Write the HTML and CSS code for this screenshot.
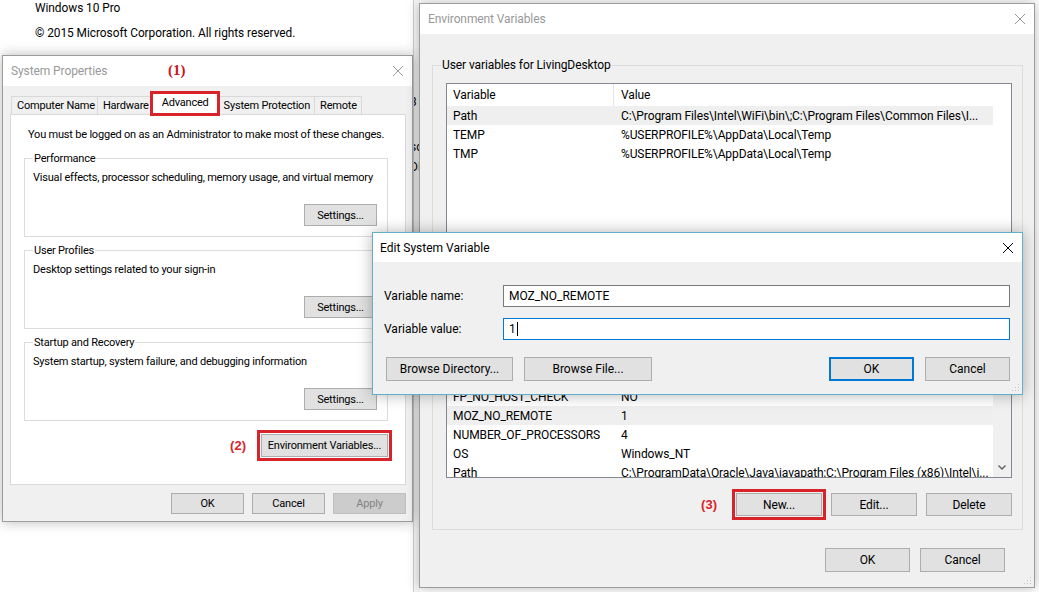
FILE: index.html
```html
<!DOCTYPE html>
<html>
<head>
  <title>Environment Variables</title>
  <link rel="stylesheet" href="styles.css">
</head>
<body>
  <!-- System window behind the dialogs -->
  <div class="about-text">
    <div class="os-name">Windows 10 Pro</div>
    <div class="copyright">© 2015 Microsoft Corporation. All rights reserved.</div>
  </div>
  <div class="behind-strip">
    <div class="frag frag-first">3</div>
    <div class="frag frag-second">sc</div>
    <div class="frag">Di</div>
  </div>

  <!-- System Properties -->
  <div class="window sysprops inactive">
    <div class="titlebar">
      <span class="title">System Properties</span>
      <svg class="close-icon" viewBox="0 0 10 10"><path d="M0 0L10 10M10 0L0 10"/></svg>
    </div>
    <div class="sysprops-body">
      <div class="tabs">
        <div class="tab">Computer Name</div>
        <div class="tab">Hardware</div>
        <div class="tab selected">Advanced</div>
        <div class="tab">System Protection</div>
        <div class="tab">Remote</div>
      </div>
      <div class="tab-panel">
        <p class="notice">You must be logged on as an Administrator to make most of these changes.</p>
        <fieldset class="group">
          <legend>Performance</legend>
          <p class="group-text">Visual effects, processor scheduling, memory usage, and virtual memory</p>
          <div class="group-actions"><button class="btn btn-settings">Settings...</button></div>
        </fieldset>
        <fieldset class="group">
          <legend>User Profiles</legend>
          <p class="group-text">Desktop settings related to your sign-in</p>
          <div class="group-actions"><button class="btn btn-settings">Settings...</button></div>
        </fieldset>
        <fieldset class="group">
          <legend>Startup and Recovery</legend>
          <p class="group-text">System startup, system failure, and debugging information</p>
          <div class="group-actions"><button class="btn btn-settings">Settings...</button></div>
        </fieldset>
        <div class="env-row">
          <span class="step">(2)</span>
          <button class="btn btn-env marked">Environment Variables...</button>
        </div>
      </div>
      <div class="dialog-buttons">
        <button class="btn btn-dialog">OK</button>
        <button class="btn btn-dialog">Cancel</button>
        <button class="btn btn-dialog" disabled>Apply</button>
      </div>
    </div>
  </div>
  <span class="step step-one">(1)</span>

  <!-- Environment Variables -->
  <div class="window envvars inactive">
    <div class="titlebar">
      <span class="title">Environment Variables</span>
      <svg class="close-icon" viewBox="0 0 10 10"><path d="M0 0L10 10M10 0L0 10"/></svg>
    </div>
    <div class="env-body">
      <fieldset class="env-group user-group">
        <legend>User variables for LivingDesktop</legend>
        <div class="list user-list">
          <div class="list-table">
            <div class="list-row list-head"><span class="col-var">Variable</span><span class="col-val">Value</span></div>
            <div class="list-row selected"><span class="col-var">Path</span><span class="col-val">C:\Program Files\Intel\WiFi\bin\;C:\Program Files\Common Files\I...</span></div>
            <div class="list-row"><span class="col-var">TEMP</span><span class="col-val">%USERPROFILE%\AppData\Local\Temp</span></div>
            <div class="list-row"><span class="col-var">TMP</span><span class="col-val">%USERPROFILE%\AppData\Local\Temp</span></div>
          </div>
        </div>
        <div class="list-buttons">
          <button class="btn btn-list">New...</button>
          <button class="btn btn-list">Edit...</button>
          <button class="btn btn-list">Delete</button>
        </div>
      </fieldset>
      <fieldset class="env-group system-group">
        <legend>System variables</legend>
        <div class="list system-list">
          <div class="list-table">
            <div class="list-row list-head"><span class="col-var">Variable</span><span class="col-val">Value</span></div>
            <div class="list-row"><span class="col-var">ComSpec</span><span class="col-val">C:\WINDOWS\system32\cmd.exe</span></div>
            <div class="list-row"><span class="col-var">DriverData</span><span class="col-val">C:\Windows\System32\Drivers\DriverData</span></div>
            <div class="list-row"><span class="col-var">FPS_BROWSER_APP_PROFILE_S...</span><span class="col-val">Internet Explorer</span></div>
            <div class="list-row"><span class="col-var">FP_NO_HOST_CHECK</span><span class="col-val">NO</span></div>
            <div class="list-row selected"><span class="col-var">MOZ_NO_REMOTE</span><span class="col-val">1</span></div>
            <div class="list-row"><span class="col-var">NUMBER_OF_PROCESSORS</span><span class="col-val">4</span></div>
            <div class="list-row"><span class="col-var">OS</span><span class="col-val">Windows_NT</span></div>
            <div class="list-row"><span class="col-var">Path</span><span class="col-val">C:\ProgramData\Oracle\Java\javapath;C:\Program Files (x86)\Intel\i...</span></div>
          </div>
          <div class="scrollbar">
            <svg class="scroll-arrow" viewBox="0 0 8 5"><path d="M0.5 0.5L4 4L7.5 0.5"/></svg>
          </div>
        </div>
        <div class="list-buttons">
          <span class="step">(3)</span>
          <button class="btn btn-list marked">New...</button>
          <button class="btn btn-list">Edit...</button>
          <button class="btn btn-list">Delete</button>
        </div>
      </fieldset>
      <div class="dialog-buttons env-buttons">
        <button class="btn btn-env-dialog">OK</button>
        <button class="btn btn-env-dialog">Cancel</button>
      </div>
    </div>
    <svg class="grip" viewBox="0 0 10 10"><path d="M8 2h1v1H8zM5 5h1v1H5zM8 5h1v1H8zM2 8h1v1H2zM5 8h1v1H5zM8 8h1v1H8z"/></svg>
  </div>

  <!-- Edit System Variable (active) -->
  <div class="window editvar">
    <div class="titlebar">
      <span class="title">Edit System Variable</span>
      <svg class="close-icon" viewBox="0 0 10 10"><path d="M0 0L10 10M10 0L0 10"/></svg>
    </div>
    <div class="edit-body">
      <div class="form-row">
        <label class="form-label" for="varName">Variable name:</label>
        <div class="text-input" id="varName">MOZ_NO_REMOTE</div>
      </div>
      <div class="form-row">
        <label class="form-label" for="varValue">Variable value:</label>
        <div class="text-input focused" id="varValue">1<span class="caret"></span></div>
      </div>
      <div class="edit-buttons">
        <button class="btn btn-browse-dir">Browse Directory...</button>
        <button class="btn btn-browse-file">Browse File...</button>
        <span class="spacer"></span>
        <button class="btn btn-edit default">OK</button>
        <button class="btn btn-edit">Cancel</button>
      </div>
    </div>
    <svg class="grip" viewBox="0 0 10 10"><path d="M8 2h1v1H8zM5 5h1v1H5zM8 5h1v1H8zM2 8h1v1H2zM5 8h1v1H5zM8 8h1v1H8z"/></svg>
  </div>
</body>
</html>
```

FILE: styles.css
```css
* {
  box-sizing: border-box;
}
html, body {
  margin: 0;
  padding: 0;
}
body {
  width: 1039px;
  height: 592px;
  position: relative;
  overflow: hidden;
  background: #fff;
  font-family: Roboto, "Liberation Sans", sans-serif;
  font-size: 12px;
  color: #000;
}
p {
  margin: 0;
}

/* Background system window */
.about-text {
  margin-top: -4px;
  padding-left: 35px;
  font-size: 11.9px;
  letter-spacing: -0.05px;
  line-height: 24px;
}
.copyright {
  margin-top: 1px;
}
.behind-strip {
  position: absolute;
  left: 413px;
  top: 0;
  width: 7px;
  height: 592px;
  overflow: hidden;
  background: #f7f7f7;
  border-left: 1px solid #cfcfcf;
  padding-top: 94px;
  font-size: 12px;
  line-height: 16px;
}
.frag {
  margin-left: -4px;
}
.frag-first {
  margin-bottom: 29px;
}
.frag-second {
  margin-bottom: 4px;
}

/* Windows */
.window {
  position: absolute;
  display: flex;
  flex-direction: column;
  background: #f0f0f0;
  border: 1px solid #9c9c9c;
  box-shadow: 0 0 12px rgba(0, 0, 0, 0.28);
}
.titlebar {
  flex: none;
  height: 30px;
  background: #fff;
  display: flex;
  align-items: center;
  justify-content: space-between;
  padding: 0 9px 0 8px;
  font-size: 12px;
  letter-spacing: -0.1px;
}
.close-icon {
  width: 10px;
  height: 10px;
  stroke: #000;
  stroke-width: 1;
  fill: none;
}
.inactive .title {
  color: #999;
}
.inactive .close-icon {
  stroke: #999;
}
.grip {
  position: absolute;
  right: 2px;
  bottom: 2px;
  width: 10px;
  height: 10px;
  fill: #c4c4c4;
}

/* Buttons */
.btn {
  font: inherit;
  letter-spacing: inherit;
  color: #000;
  background: #e1e1e1;
  border: 1px solid #adadad;
  padding: 0;
  height: 22px;
  cursor: default;
}
.btn:disabled {
  background: #cccccc;
  border-color: #bfbfbf;
  color: #838383;
}
.marked {
  outline: 3px solid #d9232b;
  outline-offset: 1px;
}
.step {
  font-family: "Liberation Sans", Arial, sans-serif;
  font-weight: bold;
  font-size: 13px;
  letter-spacing: 0;
  color: #d9232b;
}
.step-one {
  position: absolute;
  left: 168px;
  top: 62px;
  font-family: "Liberation Serif", serif;
  font-size: 15px;
  color: #c8161e;
}

/* System Properties */
.sysprops {
  left: 2px;
  top: 55px;
  width: 411px;
  height: 467px;
  font-size: 11px;
  letter-spacing: -0.2px;
}
.sysprops-body {
  flex: 1;
  display: flex;
  flex-direction: column;
  padding: 6px 6px 8px 7px;
}
.tabs {
  display: flex;
  align-items: flex-end;
  height: 22px;
  padding-left: 1px;
}
.tab {
  height: 18px;
  line-height: 17px;
  padding: 0 4px 0 5px;
  background: #f0f0f0;
  border: 1px solid #d9d9d9;
  border-bottom: none;
  margin-right: -1px;
}
.tab:first-child {
  padding-right: 2px;
}
.tab.selected {
  position: relative;
  z-index: 1;
  height: 23px;
  line-height: 19px;
  margin: 0 -1px -1px -2px;
  padding: 0 9px 0 10px;
  background: #fff;
  outline: 3px solid #d9232b;
  outline-offset: -2px;
}
.tab-panel {
  height: 371px;
  background: #fff;
  border: 1px solid #d9d9d9;
  padding: 12px 17px 0 13px;
}
.notice {
  line-height: 15px;
  margin-left: 4px;
  white-space: nowrap;
}
.group {
  margin: 9px 0 0;
  padding: 0 10px 10px 8px;
  border: 1px solid #dcdcdc;
  min-width: 0;
}
.group + .group {
  margin-top: 6px;
}
.group legend {
  padding: 0 1px;
  line-height: 15px;
}
.group-text {
  line-height: 15px;
  margin-top: 4px;
  white-space: nowrap;
}
.group-actions {
  display: flex;
  justify-content: flex-end;
  margin-top: 19px;
}
.btn-settings {
  width: 73px;
  height: 22px;
}
.env-row {
  display: flex;
  justify-content: flex-end;
  align-items: center;
  gap: 15px;
  margin-top: 13px;
}
.btn-env {
  width: 127px;
  height: 23px;
}
.dialog-buttons {
  display: flex;
  justify-content: flex-end;
  gap: 8px;
  margin-top: 8px;
}
.btn-dialog {
  width: 73px;
  height: 21px;
}

/* Environment Variables */
.envvars {
  left: 419px;
  top: 3px;
  width: 616px;
  height: 585px;
  letter-spacing: -0.1px;
}
.env-body {
  flex: 1;
  padding: 0 11px 0 12px;
}
.env-group {
  margin: 0;
  padding: 0 10px 13px 13px;
  border: 1px solid #dcdcdc;
  min-width: 0;
}
.env-group legend {
  padding: 0 1px;
  margin-left: -5px;
  line-height: 15px;
}
.user-group {
  margin-top: 24px;
}
.system-group {
  margin-top: 6px;
}
.list {
  display: flex;
  background: #fff;
  border: 1px solid #828790;
  overflow: hidden;
}
.user-list {
  margin-top: 10px;
  height: 150px;
}
.system-list {
  margin-top: 1px;
  height: 171px;
}
.list-table {
  width: 546px;
  flex: none;
}
.list-row {
  display: flex;
  height: 19px;
  align-items: center;
  white-space: nowrap;
}
.list-row.selected {
  background: #efefef;
}
.list-head {
  height: 22px;
  align-items: center;
}
.col-var {
  width: 167px;
  flex: none;
  padding-left: 6px;
  overflow: hidden;
}
.col-val {
  flex: 1;
  padding-left: 7px;
  overflow: hidden;
}
.list-head .col-var {
  height: 22px;
  line-height: 22px;
  border-right: 1px solid #e5e5e5;
}
.scrollbar {
  width: 18px;
  flex: none;
  background: #f0f0f0;
  display: flex;
  flex-direction: column;
  justify-content: flex-end;
  align-items: center;
  padding-bottom: 7px;
}
.scroll-arrow {
  width: 8px;
  height: 5px;
  fill: none;
  stroke: #606060;
  stroke-width: 1.4;
}
.list-buttons {
  display: flex;
  justify-content: flex-end;
  align-items: center;
  gap: 9px;
  margin-top: 15px;
}
.list-buttons .step {
  margin-right: 10px;
}
.btn-list {
  width: 86px;
  height: 23px;
}
.env-buttons {
  margin-top: 18px;
  padding-right: 18px;
  gap: 10px;
}
.btn-env-dialog {
  width: 85px;
  height: 24px;
}

/* Edit System Variable */
.editvar {
  left: 372px;
  top: 232px;
  width: 651px;
  height: 163px;
  border-color: #62aecb;
  box-shadow: 0 0 14px rgba(0, 0, 0, 0.3);
}
.editvar .titlebar {
  height: 29px;
  padding-left: 7px;
  letter-spacing: 0;
}
.edit-body {
  flex: 1;
  padding: 23px 12px 0 11px;
}
.form-row {
  display: flex;
  align-items: center;
  margin-bottom: 11px;
}
.form-label {
  width: 119px;
  flex: none;
}
.text-input {
  flex: 1;
  height: 22px;
  background: #fff;
  border: 1px solid #7a7a7a;
  padding-left: 5px;
  display: flex;
  align-items: center;
}
.text-input.focused {
  border-color: #0078d7;
}
.caret {
  width: 1px;
  height: 14px;
  background: #000;
  margin-left: 1px;
}
.edit-buttons {
  display: flex;
  gap: 11px;
  margin-top: 17px;
  padding-left: 2px;
}
.spacer {
  flex: 1;
}
.btn-browse-dir {
  width: 127px;
  height: 24px;
}
.btn-browse-file {
  width: 128px;
  height: 24px;
}
.btn-edit {
  width: 85px;
  height: 24px;
}
.btn-edit.default {
  border-color: #0078d7;
  box-shadow: inset 0 0 0 1px #0078d7;
}
```
